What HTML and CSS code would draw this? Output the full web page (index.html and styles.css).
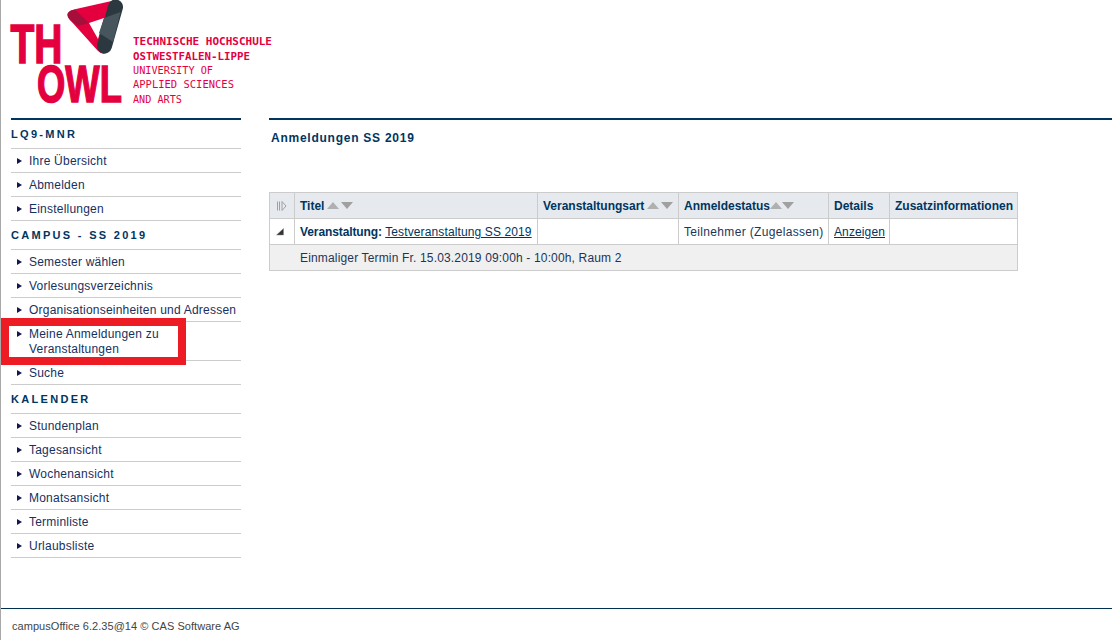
FILE: index.html
```html
<!DOCTYPE html>
<html lang="de">
<head>
<meta charset="utf-8">
<title>campusOffice</title>
<link rel="stylesheet" href="styles.css">
</head>
<body>
<div class="page">
  <aside class="sidebar">
    <div class="logo">
      <svg class="logo-svg" width="270" height="118" viewBox="11 0 270 118">
        <path class="logo-red" d="M76 9L116 0L120 10L108 52Q103 56 98 51L71 21Q64 14 71 10.500ZM89 23L104 18L98 39Z"/>
        <path class="logo-dark-red" d="M75 9.500L89 23L78 26L71 21Q64 14 71 10.500Z"/>
        <path class="logo-band" d="M115.500 7L104.500 46"/>
        <path class="logo-band-light" d="M104 18L120.500 12L113 42L99 33Z"/>
        <text class="logo-big" transform="translate(10.500 63) scale(.71 1)">TH</text>
        <text class="logo-big logo-big-b" transform="translate(37 102) scale(.7 1)">OWL</text>
        <text class="logo-small logo-strong" x="133" y="45" textLength="139" lengthAdjust="spacingAndGlyphs">TECHNISCHE HOCHSCHULE</text>
        <text class="logo-small logo-strong" x="133" y="59.500" textLength="117" lengthAdjust="spacingAndGlyphs">OSTWESTFALEN-LIPPE</text>
        <text class="logo-small" x="133" y="74" textLength="80" lengthAdjust="spacingAndGlyphs">UNIVERSITY OF</text>
        <text class="logo-small" x="133" y="88" textLength="101" lengthAdjust="spacingAndGlyphs">APPLIED SCIENCES</text>
        <text class="logo-small" x="133" y="102.500" textLength="49" lengthAdjust="spacingAndGlyphs">AND ARTS</text>
      </svg>
    </div>
    <nav class="nav">
      <h2 class="nav-title">LQ9-MNR</h2>
      <a class="nav-item">Ihre Übersicht</a>
      <a class="nav-item">Abmelden</a>
      <a class="nav-item">Einstellungen</a>
      <h2 class="nav-title">CAMPUS - SS 2019</h2>
      <a class="nav-item">Semester wählen</a>
      <a class="nav-item">Vorlesungsverzeichnis</a>
      <a class="nav-item">Organisationseinheiten und Adressen</a>
      <a class="nav-item nav-item-marked">Meine Anmeldungen zu<br>Veranstaltungen</a>
      <a class="nav-item">Suche</a>
      <h2 class="nav-title">KALENDER</h2>
      <a class="nav-item">Stundenplan</a>
      <a class="nav-item">Tagesansicht</a>
      <a class="nav-item">Wochenansicht</a>
      <a class="nav-item">Monatsansicht</a>
      <a class="nav-item">Terminliste</a>
      <a class="nav-item">Urlaubsliste</a>
    </nav>
  </aside>
  <main class="main">
    <div class="content">
      <h1 class="heading">Anmeldungen SS 2019</h1>
      <table class="table">
        <colgroup>
          <col class="c0"><col class="c1"><col class="c2"><col class="c3"><col class="c4"><col class="c5">
        </colgroup>
        <thead>
          <tr>
            <th class="th-icon">
              <svg width="11" height="10" viewBox="0 0 11 10"><path class="expand-icon" d="M1.500 .5V9.500M3.500 .5V9.500M6 .5V9.500L10 5Z"/></svg>
            </th>
            <th>Titel<span class="sort sort-wide"><i class="up"></i><i class="down"></i></span></th>
            <th>Veranstaltungsart<span class="sort sort-wide"><i class="up"></i><i class="down"></i></span></th>
            <th>Anmeldestatus<span class="sort"><i class="up"></i><i class="down"></i></span></th>
            <th>Details</th>
            <th>Zusatzinformationen</th>
          </tr>
        </thead>
        <tbody>
          <tr>
            <td class="td-icon"><svg width="8" height="8" viewBox="0 0 8 8"><path class="open-icon" d="M7.500 .5V7H.5Z"/></svg></td>
            <td><b>Veranstaltung:</b> <a class="link">Testveranstaltung SS 2019</a></td>
            <td></td>
            <td class="td-status">Teilnehmer (Zugelassen)</td>
            <td><a class="link">Anzeigen</a></td>
            <td></td>
          </tr>
          <tr class="row-detail">
            <td colspan="6">Einmaliger Termin Fr. 15.03.2019 09:00h - 10:00h, Raum 2</td>
          </tr>
        </tbody>
      </table>
    </div>
  </main>
</div>
<footer class="footer">campusOffice 6.2.35@14 © CAS Software AG</footer>
</body>
</html>
```

FILE: styles.css
```css
* { box-sizing: border-box; }
html, body { margin: 0; height: 640px; overflow: hidden; }
body {
  border-left: 1px solid #a9a9a9;
  font-family: "Liberation Sans", Arial, sans-serif;
  font-size: 12px;
  color: #003560;
  background: #fff;
  display: flex;
  flex-direction: column;
}
.page { flex: 1; display: flex; min-height: 0; }
.sidebar { width: 230px; margin-left: 10px; flex: none; }
.logo { height: 118px; }
.logo-svg { display: block; overflow: visible; }
.logo-red { fill: #e4003f; fill-rule: evenodd; }
.logo-dark-red { fill: #a60f3c; }
.logo-band { fill: none; stroke: #2c3840; stroke-width: 15; stroke-linecap: round; }
.logo-band-light { fill: #47555c; }
.logo-big { font-family: "Liberation Sans", sans-serif; font-weight: 700; font-size: 55px; fill: #e4003f; stroke: #e4003f; stroke-width: 1.500; }
.logo-big-b { font-size: 52px; }
.logo-small { font-family: "DejaVu Sans Mono", monospace; font-size: 10.500px; fill: #e4003f; }
.logo-strong { font-weight: 700; }
.nav { border-top: 2px solid #003560; }
.nav-title {
  margin: 0;
  height: 29px;
  border-bottom: 1px solid #ccc;
  font-size: 11px;
  font-weight: 700;
  line-height: 29px;
  letter-spacing: 2.300px;
  color: #003560;
}
.nav-item {
  display: block;
  position: relative;
  padding: 5px 0 3px 18px;
  border-bottom: 1px solid #ccc;
  line-height: 15px;
  color: #16305f;
  letter-spacing: .22px;
  white-space: nowrap;
}
.nav-item::before {
  content: "";
  position: absolute;
  left: 6px;
  top: 9px;
  border-left: 5px solid #12174f;
  border-top: 3.500px solid transparent;
  border-bottom: 3.500px solid transparent;
}
.nav-item-marked::after {
  content: "";
  position: absolute;
  left: -10px;
  top: -4px;
  width: 169px;
  height: 31px;
  border: 8px solid #ed1c24;
}
.main { flex: 1; margin-left: 28px; padding-top: 118px; min-width: 0; }
.content { border-top: 2px solid #003560; height: 100%; }
.heading {
  margin: 0 0 0 2px;
  padding-top: 11px;
  font-size: 12px;
  line-height: 15px;
  letter-spacing: .75px;
  color: #003560;
}
.table {
  margin-top: 46px;
  width: 748px;
  table-layout: fixed;
  border-collapse: collapse;
  border: 1px solid #ccc;
}
.c0 { width: 25px; }
.c1 { width: 243px; }
.c2 { width: 141px; }
.c3 { width: 150px; }
.c4 { width: 61px; }
.c5 { width: 128px; }
.table th, .table td {
  height: 26px;
  padding: 2px 5px 0;
  border: 1px solid #ccc;
  text-align: left;
  white-space: nowrap;
  line-height: 15px;
}
.table th { background: #e6eaee; font-weight: 700; color: #003560; }
.table td { color: #1d3557; letter-spacing: .12px; }
.table td b { color: #003560; letter-spacing: -.1px; }
.table .td-status { letter-spacing: .33px; }
.table .th-icon { padding: 0 0 0 6px; }
.table .td-icon { padding: 0 0 0 6px; }
.table th svg, .table td svg { display: block; }
.expand-icon { fill: none; stroke: #a0a0a0; stroke-width: 1; }
.open-icon { fill: #333; stroke: #888; stroke-width: .5; }
.link { color: #003560; text-decoration: underline; }
.row-detail td { background: #f0f0f0; }
.table .row-detail td { color: #1d3557; padding-left: 30px; letter-spacing: .16px; }
.sort { display: inline-flex; vertical-align: 1px; }
.sort-wide { margin-left: 3px; gap: 2px; }
.up, .down { display: block; width: 0; height: 0; border-left: 6px solid transparent; border-right: 6px solid transparent; }
.up { border-bottom: 7px solid #b0b0b0; }
.down { border-top: 7px solid #a0a0a0; }
.footer {
  flex: none;
  height: 32px;
  border-top: 1px solid #00304f;
  padding: 10px 0 0 11px;
  font-size: 11px;
  line-height: 15px;
  color: #444;
  letter-spacing: .05px;
}
```
